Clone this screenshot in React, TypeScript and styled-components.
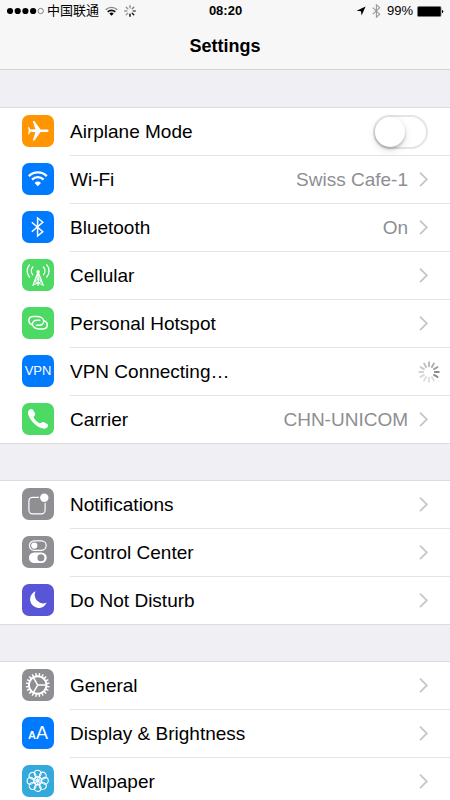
import React from "react";
import styled, { createGlobalStyle, css } from "styled-components";

const GlobalStyle = createGlobalStyle`
  *, *::before, *::after { box-sizing: border-box; }
  body {
    margin: 0;
    background: #efeff4;
    color: #000;
    font-family: "Liberation Sans", "Noto Sans CJK SC", Arial, sans-serif;
  }
`;

const Screen = styled.div`
  display: flex;
  flex-direction: column;
  height: 100vh;
`;

const TopBar = styled.header`
  flex: none;
  background: #f7f7f7;
  border-bottom: 1px solid #d2d2d4;
`;

const StatusBar = styled.div`
  display: grid;
  grid-template-columns: 1fr auto 1fr;
  align-items: center;
  height: 22px;
  padding: 0 6px 0 7px;
  font-size: 13px;
  line-height: 22px;
`;

const StatusGroup = styled.div<{ $end?: boolean }>`
  display: flex;
  align-items: center;
  gap: ${(p) => (p.$end ? 6 : 6)}px;
  justify-content: ${(p) => (p.$end ? "flex-end" : "flex-start")};
`;

const Signal = styled.div`
  display: flex;
  align-items: center;
  gap: 3px;
`;

const Battery = styled.div`
  display: flex;
  align-items: center;
  gap: 4px;
`;

const Clock = styled.time`
  font-weight: bold;
`;

const Title = styled.h1`
  margin: 0;
  padding: 12px 0 11px;
  font-size: 18px;
  line-height: 24px;
  font-weight: bold;
  text-align: center;
`;

const Content = styled.main`
  flex: 1;
  min-height: 0;
  padding-top: 37px;
  overflow-y: auto;
  scrollbar-width: none;
  display: flex;
  flex-direction: column;
  gap: 36px;
`;

const Group = styled.ul`
  flex: none;
  margin: 0;
  padding: 0;
  list-style: none;
  background: #fff;
  border: solid #dcdce0;
  border-width: 1px 0;
`;

const rowLayout = css`
  display: flex;
  align-items: stretch;
  gap: 16px;
  min-height: 48px;
  padding-left: 22px;
  color: inherit;
  text-decoration: none;

  li:last-child > & {
    min-height: 47px;
  }
`;

const LinkRow = styled.a`
  ${rowLayout}
`;

const PlainRow = styled.div`
  ${rowLayout}
`;

const IconTile = styled.span<{ $color: string }>`
  flex: none;
  display: flex;
  align-items: baseline;
  justify-content: center;
  width: 32px;
  height: 32px;
  margin-top: 7px;
  border-radius: 7px;
  background: ${(p) => p.$color};
  color: #fff;
  line-height: 32px;
  overflow: hidden;

  svg {
    display: block;
  }
`;

const Glyph = styled.span<{ $size: number; $bold?: boolean }>`
  font-size: ${(p) => p.$size}px;
  font-weight: ${(p) => (p.$bold ? "bold" : "normal")};
`;

const RowBody = styled.div<{ $tight?: boolean }>`
  flex: 1;
  display: flex;
  align-items: center;
  gap: 11px;
  padding-right: ${(p) => (p.$tight ? 10 : 22)}px;
  border-bottom: 1px solid #e4e4e6;
  font-size: 19px;
  line-height: 24px;

  li:last-child & {
    border-bottom: 0;
  }

  svg {
    display: block;
    flex: none;
  }
`;

const Label = styled.span`
  flex: 1;
`;

const SwitchLabel = styled.label`
  flex: 1;
`;

const Value = styled.span`
  color: #8e8e93;
`;

const Switch = styled.input`
  appearance: none;
  flex: none;
  display: flex;
  align-items: center;
  width: 55px;
  height: 34px;
  margin: 0;
  border: 2px solid #e5e5e5;
  border-radius: 17px;
  background: #fff;

  &::before {
    content: "";
    width: 30px;
    height: 30px;
    border-radius: 50%;
    background: #fff;
    box-shadow: 0 2px 3px rgba(0, 0, 0, 0.22), 0 3px 8px rgba(0, 0, 0, 0.12);
  }

  &:checked {
    background: #4cd964;
    border-color: #4cd964;
    justify-content: flex-end;
  }
`;

const Svg = ({ children }: { children: React.ReactNode }) => (
  <svg width="32" height="32" viewBox="0 0 32 32" fill="none" stroke="none" aria-hidden="true">
    {children}
  </svg>
);

const Chevron = () => (
  <svg width="9" height="16" viewBox="0 0 9 16" fill="none" aria-hidden="true">
    <path d="M1 .6L7.8 7.4L1 14.2" stroke="#c7c7cc" strokeWidth="1.9" />
  </svg>
);

const Spinner = ({ size, colors, width }: { size: number; colors: string[]; width: number }) => (
  <svg width={size} height={size} viewBox="-11 -11 22 22" role="img" aria-label="Loading">
    {colors.map((color, i) => (
      <line
        key={i}
        x1="0"
        y1="-5.8"
        x2="0"
        y2="-9.8"
        stroke={color}
        strokeWidth={width}
        strokeLinecap="round"
        transform={`rotate(${(i * 360) / colors.length})`}
      />
    ))}
  </svg>
);

const rowSpinner = [
  "#b9b9b9", "#adadad", "#9f9f9f", "#8b8b8b", "#8a8a8a", "#dedede",
  "#e0e0e0", "#dddddd", "#d9d9d9", "#d3d3d3", "#cbcbcb", "#c2c2c2",
];
const statusSpinner = ["#888", "#777", "#555", "#111", "#000", "#999", "#999", "#909090"];

const AirplaneIcon = () => (
  <Svg>
    <path
      fill="#fff"
      d="M26.8 15.7c0 .8-1.2 1.3-2.6 1.3h-5.600l-6.200 8.400h-1.700l2.700-8.200-4.900-.4-1.600 2.700H6.100l.6-3.800-.6-3.800h.8l1.600 2.700 4.900-.4L10.700 6h1.700l6.200 8.400h5.600c1.400 0 2.600.5 2.600 1.300z"
    />
  </Svg>
);

const WifiIcon = () => (
  <Svg>
    <path d="M6.800 13.100A12.800 12.800 0 0 1 24.800 13.100" stroke="#fff" strokeWidth="2.300" />
    <path d="M10 16.600A8.200 8.200 0 0 1 21.600 16.600" stroke="#fff" strokeWidth="2.300" />
    <path d="M15.800 23.200L12.600 19.900A4.600 4.600 0 0 1 19 19.900Z" fill="#fff" />
  </Svg>
);

const BluetoothIcon = () => (
  <Svg>
    <path d="M9.800 11.200L20.800 20.700L15.600 25V7L20.800 11.200L9.800 20.700" stroke="#fff" strokeWidth="1.500" />
  </Svg>
);

const CellularIcon = () => (
  <Svg>
    <g stroke="#fff" strokeWidth="1.300" strokeLinecap="round">
      <path d="M7.400 5.800A9.500 9.500 0 0 0 7.400 18M10.800 8A6 6 0 0 0 10.800 15.800M24.800 5.800A9.500 9.500 0 0 1 24.800 18M21.400 8A6 6 0 0 1 21.400 15.800" />
      <path d="M16.100 13V26.300M16.100 13L11 26.300M16.100 13L21.200 26.300" />
      <path strokeWidth="1" d="M14.200 18.500L19.600 22.500L11.800 25.800M18 18.500L12.600 22.500L20.400 25.800" />
    </g>
    <circle cx="16.100" cy="12.800" r="1.700" fill="#fff" />
  </Svg>
);

const HotspotIcon = () => (
  <Svg>
    <g stroke="#fff" strokeWidth="1.500" strokeLinecap="round">
      <path d="M10.100 17.800C8 17 6.800 15.400 6.800 13.600C6.800 11.200 8.700 9.500 11.300 9.500H14.800C18.600 9.500 21.700 11.300 21.700 14.300C21.700 16.600 19.700 18.200 17.200 18.200H14.400" />
      <path d="M22 13.600C24.100 14.400 25.300 16 25.300 17.800C25.300 20.200 23.400 21.900 20.800 21.900H17.300C13.500 21.900 10.400 20.100 10.400 17.100C10.400 14.800 12.400 13.200 14.900 13.200H17.700" />
    </g>
  </Svg>
);

const PhoneIcon = () => (
  <Svg>
    <path
      fill="#fff"
      d="M8.200 6.200C9.400 5.700 10.500 5.900 11.100 6.900L13 10.300C13.600 11.400 13.200 12.100 12.400 12.700C11.600 13.300 11.500 13.900 12 14.900C13.300 17.200 15.300 19.100 17.600 20.200C18.600 20.600 19 20.200 19.700 19.500C20.400 18.800 21.200 18.700 22.100 19.200L25.300 21.100C26.300 21.800 26.400 22.700 25.700 23.800C24.600 25.300 23 26.100 21 25.600C14 24 7.200 16.500 6 10.500C5.700 8.600 6.500 7 8.200 6.200z"
    />
  </Svg>
);

const NotificationsIcon = () => (
  <Svg>
    <rect x="6.900" y="9.300" width="16.200" height="16.600" rx="3.600" stroke="#fff" strokeWidth="1.200" />
    <circle cx="22.300" cy="9.800" r="5.400" fill="#8e8e93" />
    <circle cx="22.300" cy="9.800" r="4.200" fill="#fff" />
  </Svg>
);

const ControlCenterIcon = () => (
  <Svg>
    <rect x="7.400" y="4.900" width="16.800" height="9.400" rx="4.700" stroke="#fff" strokeWidth="1.200" />
    <circle cx="12.300" cy="9.600" r="3.100" fill="#fff" />
    <rect x="6.900" y="16.500" width="17.800" height="10.500" rx="5.250" fill="#fff" />
    <circle cx="18.900" cy="21.800" r="3.500" fill="#8e8e93" />
  </Svg>
);

const MoonIcon = () => (
  <Svg>
    <path fill="#fff" d="M13.600 7.300A8.600 8.600 0 1 0 24.700 18.500A8.400 8.400 0 0 1 13.600 7.300z" />
  </Svg>
);

const GearIcon = () => (
  <Svg>
    <g transform="translate(15.700 16)" stroke="#fff">
      <circle r="8.800" strokeWidth="2" />
      {Array.from({ length: 20 }, (_, i) => (
        <line key={i} x1="9" x2="12" strokeWidth="1.500" transform={`rotate(${i * 18 + 9})`} />
      ))}
      {[0, 120, 240].map((angle) => (
        <line key={angle} x1="0" x2="8.500" strokeWidth="1.500" transform={`rotate(${angle})`} />
      ))}
    </g>
  </Svg>
);

const WallpaperIcon = () => (
  <Svg>
    <g transform="translate(15.700 15.800)" stroke="#fff">
      {Array.from({ length: 8 }, (_, i) => (
        <g key={i} transform={`rotate(${i * 45})`}>
          <circle cx="7.200" r="3.400" strokeWidth="1.100" />
          <circle cx="2.400" r="2" strokeWidth="0.700" />
        </g>
      ))}
    </g>
  </Svg>
);

const VpnIcon = () => <Glyph $size={13} aria-hidden="true">VPN</Glyph>;

const TextSizeIcon = () => (
  <>
    <Glyph $size={11} $bold aria-hidden="true">A</Glyph>
    <Glyph $size={18} aria-hidden="true">A</Glyph>
  </>
);

type Item = {
  label: string;
  color: string;
  Icon: () => React.ReactElement;
  value?: string;
  kind?: "switch" | "progress";
};

const groups: Item[][] = [
  [
    { label: "Airplane Mode", color: "#ff9500", Icon: AirplaneIcon, kind: "switch" },
    { label: "Wi-Fi", color: "#007aff", Icon: WifiIcon, value: "Swiss Cafe-1" },
    { label: "Bluetooth", color: "#007aff", Icon: BluetoothIcon, value: "On" },
    { label: "Cellular", color: "#4cd964", Icon: CellularIcon },
    { label: "Personal Hotspot", color: "#4cd964", Icon: HotspotIcon },
    { label: "VPN Connecting…", color: "#007aff", Icon: VpnIcon, kind: "progress" },
    { label: "Carrier", color: "#4cd964", Icon: PhoneIcon, value: "CHN-UNICOM" },
  ],
  [
    { label: "Notifications", color: "#8e8e93", Icon: NotificationsIcon },
    { label: "Control Center", color: "#8e8e93", Icon: ControlCenterIcon },
    { label: "Do Not Disturb", color: "#5856d6", Icon: MoonIcon },
  ],
  [
    { label: "General", color: "#8e8e93", Icon: GearIcon },
    { label: "Display & Brightness", color: "#007aff", Icon: TextSizeIcon },
    { label: "Wallpaper", color: "#34aadc", Icon: WallpaperIcon },
  ],
];

const SettingsRow = ({ label, color, Icon, value, kind }: Item) => {
  const tile = (
    <IconTile $color={color}>
      <Icon />
    </IconTile>
  );

  if (kind === "switch") {
    return (
      <PlainRow>
        {tile}
        <RowBody>
          <SwitchLabel htmlFor="airplane-mode">{label}</SwitchLabel>
          <Switch id="airplane-mode" type="checkbox" role="switch" />
        </RowBody>
      </PlainRow>
    );
  }

  if (kind === "progress") {
    return (
      <PlainRow>
        {tile}
        <RowBody $tight>
          <Label>{label}</Label>
          <Spinner size={22} colors={rowSpinner} width={1.9} />
        </RowBody>
      </PlainRow>
    );
  }

  return (
    <LinkRow href="#">
      {tile}
      <RowBody>
        <Label>{label}</Label>
        {value && <Value>{value}</Value>}
        <Chevron />
      </RowBody>
    </LinkRow>
  );
};

const StatusIcons = () => (
  <StatusBar>
    <StatusGroup>
      <Signal>
        <svg width="37" height="8" viewBox="0 0 37 8" role="img" aria-label="Signal strength">
          {[3, 10.7, 18.4, 26.1].map((x) => (
            <circle key={x} cx={x} cy="4" r="3.100" />
          ))}
          <circle cx="33.700" cy="4" r="2.700" fill="none" stroke="#555" strokeWidth="0.700" />
        </svg>
        <span>中国联通</span>
      </Signal>
      <svg width="13" height="10" viewBox="0 0 13 10" fill="none" role="img" aria-label="Wi-Fi">
        <path d="M.700 3.700A8.300 8.300 0 0 1 12.300 3.700" stroke="#888" strokeWidth="1.400" />
        <path d="M2.700 5.900A5.400 5.400 0 0 1 10.300 5.900" stroke="#111" strokeWidth="1.600" />
        <path d="M6.500 9.800L4.300 7.600A3.100 3.100 0 0 1 8.700 7.600Z" fill="#000" />
      </svg>
      <Spinner size={12} colors={statusSpinner} width={2.4} />
    </StatusGroup>
    <Clock>08:20</Clock>
    <StatusGroup $end>
      <svg width="10" height="10" viewBox="0 0 10 10" role="img" aria-label="Location">
        <path d="M9.600.600L5.600 9.400L5 5.200L.600 4.700Z" />
      </svg>
      <svg width="9" height="14" viewBox="0 0 9 14" fill="none" role="img" aria-label="Bluetooth">
        <path d="M.800 3.700L7.700 10.200L4.400 13.200V.800L7.700 3.700L.800 10.200" stroke="#999" strokeWidth="1.100" />
      </svg>
      <Battery>
        <span>99%</span>
        <svg width="27" height="11" viewBox="0 0 27 11" role="img" aria-label="Battery">
          <rect x=".500" y=".500" width="23.500" height="10" rx="1.300" fill="#000" stroke="#777" strokeWidth=".800" />
          <path d="M25 3.800C26.800 4.300 26.800 6.700 25 7.200Z" />
        </svg>
      </Battery>
    </StatusGroup>
  </StatusBar>
);

export default function App() {
  return (
    <>
      <GlobalStyle />
      <Screen>
        <TopBar>
          <StatusIcons />
          <Title>Settings</Title>
        </TopBar>
        <Content>
          {groups.map((items, i) => (
            <Group key={i}>
              {items.map((item) => (
                <li key={item.label}>
                  <SettingsRow {...item} />
                </li>
              ))}
            </Group>
          ))}
        </Content>
      </Screen>
    </>
  );
}
